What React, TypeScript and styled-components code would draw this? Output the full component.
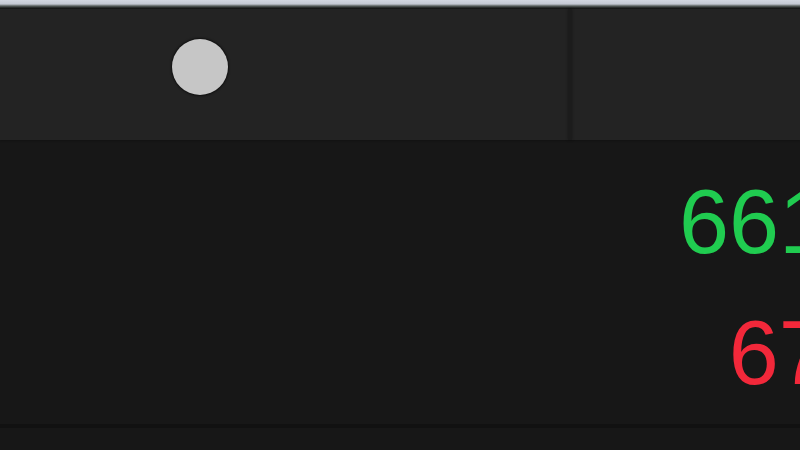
import React from "react";
import styled, { createGlobalStyle } from "styled-components";

const Global = createGlobalStyle`
  html, body { margin: 0; padding: 0; background: #171717; }
  body { width: 800px; height: 450px; overflow: hidden; font-family: "Liberation Sans", Arial, sans-serif; }
`;

const Screen = styled.div`
  width: 800px;
  height: 450px;
  display: flex;
  flex-direction: column;
  overflow: hidden;
  background: #171717;
`;

const TopStrip = styled.div`
  height: 9px;
  flex: none;
  background: linear-gradient(#d2d6e0 0px, #c4c8d3 4px, #59605e 6px, #1a1c1b 8px, #151515 9px);
`;

const Header = styled.div`
  height: 131px;
  flex: none;
  display: flex;
  background: #232323;
  box-shadow: 0 1px 2px rgba(0, 0, 0, 0.25);
`;

const HeaderCell = styled.div<{ $w?: number }>`
  ${(p) => (p.$w ? `width: ${p.$w}px; flex: none;` : "flex: 1;")}
  display: flex;
  align-items: flex-start;
  padding: 30px 0 0 172px;
  box-sizing: border-box;
`;

const Divider = styled.div`
  width: 4px;
  flex: none;
  background: #1c1c1c;
  box-shadow: 0 0 3px rgba(0, 0, 0, 0.35);
`;

const Knob = styled.div`
  width: 56px;
  height: 56px;
  border-radius: 50%;
  background: #c6c6c6;
  box-shadow: 0 0 2px 1px rgba(0, 0, 0, 0.55);
`;

const Body = styled.div`
  height: 284px;
  flex: none;
  display: flex;
  flex-direction: column;
  gap: 41px;
  padding-top: 37px;
  box-sizing: border-box;
`;

const Row = styled.div`
  display: grid;
  grid-template-columns: 679px 325px;
  height: 90px;
`;

const Value = styled.div<{ $up: boolean }>`
  grid-column: 2;
  text-align: right;
  white-space: nowrap;
  font-size: 90px;
  line-height: 90px;
  color: ${(p) => (p.$up ? "#20cc50" : "#f2283a")};
`;

const Rule = styled.div`
  height: 4px;
  flex: none;
  background: #111111;
`;

const Footer = styled.div`
  flex: 1;
  background: #171717;
`;

const rows = [
  { value: "6612.40", up: true },
  { value: "673.25", up: false },
];

export default function App() {
  return (
    <Screen>
      <Global />
      <TopStrip />
      <Header>
        <HeaderCell $w={568}>
          <Knob />
        </HeaderCell>
        <Divider />
        <HeaderCell />
      </Header>
      <Body>
        {rows.map((r) => (
          <Row key={r.value}>
            <Value $up={r.up}>{r.value}</Value>
          </Row>
        ))}
      </Body>
      <Rule />
      <Footer />
    </Screen>
  );
}
